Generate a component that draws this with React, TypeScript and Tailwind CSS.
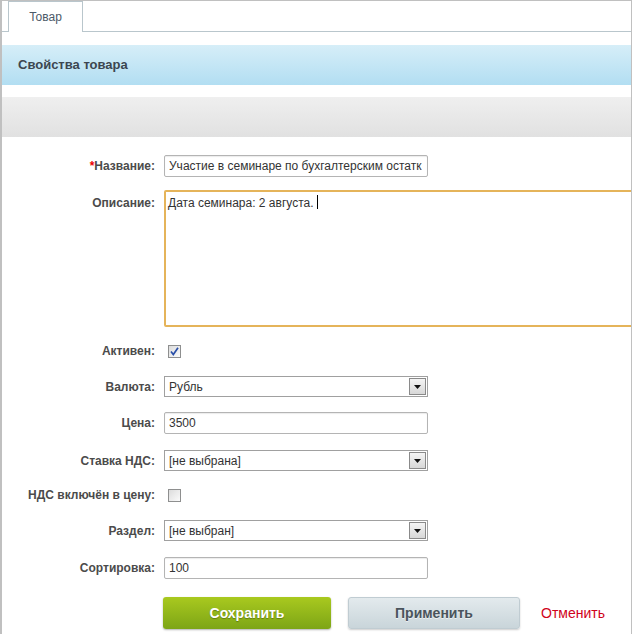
import React from 'react';

const font = { fontFamily: '"Liberation Sans", Arial, sans-serif' };

const Label = ({ children, top }: { children: React.ReactNode; top?: boolean }) => (
  <div
    className={`w-[153px] shrink-0 text-right text-[12px] font-bold text-[#4b4b4b] ${top ? 'self-start pt-[4px]' : ''}`}
  >
    {children}
  </div>
);

const TextInput = ({ value }: { value: string }) => (
  <div className="ml-[9px] flex h-[22px] w-[264px] items-center overflow-hidden whitespace-nowrap rounded-[2px] border border-[#b4b4b4] bg-white px-[4px] text-[12px] text-[#333] shadow-[inset_0_1px_1px_rgba(0,0,0,0.08)]">
    {value}
  </div>
);

const Select = ({ value }: { value: string }) => (
  <div className="ml-[9px] flex h-[21px] w-[264px] items-center border border-[#a0a0a0] bg-white pl-[4px] pr-[1px] text-[12px] text-[#333]">
    <span className="flex-1 truncate">{value}</span>
    <span className="flex h-[17px] w-[17px] items-center justify-center border border-[#8a8a8a] bg-gradient-to-b from-[#f4f4f4] to-[#d8d8d8]">
      <svg width="7" height="4" viewBox="0 0 7 4">
        <path d="M0 0h7L3.5 4z" fill="#111" />
      </svg>
    </span>
  </div>
);

const Checkbox = ({ checked }: { checked?: boolean }) => (
  <span className="ml-[13px] flex h-[13px] w-[13px] items-center justify-center border border-[#8e8f8f] bg-gradient-to-br from-[#dcdcdc] to-[#fbfbfb]">
    {checked && (
      <svg width="9" height="9" viewBox="0 0 9 9">
        <path d="M1 4.5l2.3 3L8 0.8" stroke="#2a4fa8" strokeWidth="1.7" fill="none" />
      </svg>
    )}
  </span>
);

export default function App() {
  return (
    <div style={font} className="h-[634px] w-[632px] overflow-hidden bg-white">
      <div className="relative h-[634px] w-[632px] overflow-hidden border-l-2 border-r border-t border-[#c0c0c0]">
        {/* tabs */}
        <div className="flex h-[31px] border-b border-[#b9c6cc]">
          <div className="ml-[6px] -mb-px flex h-[31px] w-[75px] items-center justify-center border-x border-t border-[#b9c6cc] bg-white text-[12px] text-[#4c5a68]">
            Товар
          </div>
        </div>

        {/* section title */}
        <div className="mt-[13px] flex h-[40px] items-center bg-gradient-to-b from-[#d6eef8] to-[#b2def2] pl-[16px] text-[13px] font-bold text-[#3c4650]">
          Свойства товара
        </div>

        <div className="mt-[12px] h-[40px] bg-gradient-to-b from-[#efefef] to-[#e1e1e1]" />

        {/* form */}
        <div className="mt-[18px]">
          <div className="flex h-[22px] items-center">
            <Label>
              <span className="text-[#e00]">*</span>Название:
            </Label>
            <TextInput value="Участие в семинаре по бухгалтерским остатк" />
          </div>

          <div className="mt-[13px] flex h-[137px]">
            <Label top>Описание:</Label>
            <div className="ml-[9px] h-[137px] w-[500px] shrink-0 rounded-[2px] border-2 border-[#e5b45a] bg-white px-[2px] pt-[1px] text-[12px] text-[#333]">
              Дата семинара: 2 августа.{' '}
              <span className="inline-block h-[14px] w-px translate-y-[2px] bg-black" />
            </div>
          </div>

          <div className="mt-[14px] flex h-[20px] items-center">
            <Label>Активен:</Label>
            <Checkbox checked />
          </div>

          <div className="mt-[15px] flex h-[21px] items-center">
            <Label>Валюта:</Label>
            <Select value="Рубль" />
          </div>

          <div className="mt-[15px] flex h-[22px] items-center">
            <Label>Цена:</Label>
            <TextInput value="3500" />
          </div>

          <div className="mt-[16px] flex h-[21px] items-center">
            <Label>Ставка НДС:</Label>
            <Select value="[не выбрана]" />
          </div>

          <div className="mt-[14px] flex h-[20px] items-center">
            <Label>НДС включён в цену:</Label>
            <Checkbox />
          </div>

          <div className="mt-[15px] flex h-[21px] items-center">
            <Label>Раздел:</Label>
            <Select value="[не выбран]" />
          </div>

          <div className="mt-[16px] flex h-[22px] items-center">
            <Label>Сортировка:</Label>
            <TextInput value="100" />
          </div>

          <div className="ml-[161px] mt-[18px] flex h-[32px] items-center">
            <button className="h-[32px] w-[168px] rounded-[3px] bg-gradient-to-b from-[#a9c91f] to-[#7da516] text-[14px] font-bold text-white shadow-[0_1px_2px_rgba(0,0,0,0.3)] [text-shadow:0_1px_1px_rgba(0,0,0,0.3)]">
              Сохранить
            </button>
            <button className="ml-[17px] h-[32px] w-[172px] rounded-[3px] border border-[#c0ccd2] bg-gradient-to-b from-[#e3eaed] to-[#c9d5da] text-[14px] font-bold text-[#4a545c] shadow-[0_1px_2px_rgba(0,0,0,0.2)] [text-shadow:0_1px_0_rgba(255,255,255,0.6)]">
              Применить
            </button>
            <span className="ml-[21px] text-[14px] text-[#d0021b]">Отменить</span>
          </div>
        </div>
      </div>
    </div>
  );
}
